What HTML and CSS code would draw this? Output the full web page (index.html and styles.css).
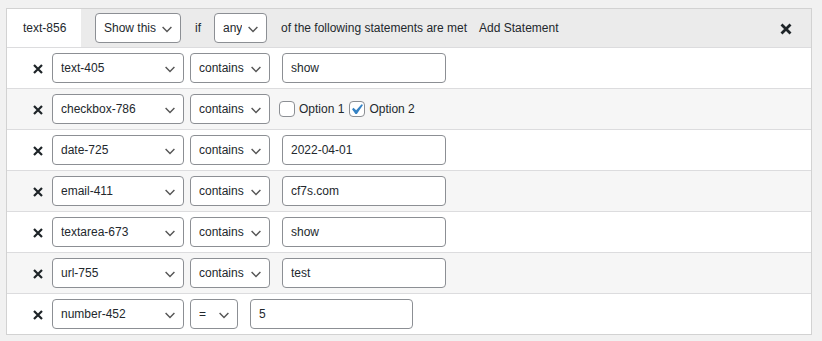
FILE: index.html
```html
<!DOCTYPE html>
<html>
<head>
<meta charset="utf-8">
<link rel="stylesheet" href="styles.css">
</head>
<body>
<div class="cond">
  <div class="cond-head">
    <div class="tag">text-856</div>
    <select class="sel sel-show"><option>Show this</option></select>
    <span class="lbl lbl-if">if</span>
    <select class="sel sel-any"><option>any</option></select>
    <span class="lbl lbl-of">of the following statements are met</span>
    <span class="lbl lbl-add">Add Statement</span>
    <span class="head-close"><svg width="12" height="12" viewBox="0 0 12 12"><path d="M1.5 1.5L10.5 10.5M10.5 1.5L1.5 10.5" stroke="#1d2327" stroke-width="2.8"/></svg></span>
  </div>
  <div class="rows">
    <div class="row">
      <span class="del"><svg width="10" height="10" viewBox="0 0 10 10"><path d="M1 1L9 9M9 1L1 9" stroke="#1d2327" stroke-width="2.2"/></svg></span>
      <select class="sel sel-field"><option>text-405</option></select>
      <select class="sel sel-op"><option>contains</option></select>
      <input class="val" type="text" value="show">
    </div>
    <div class="row">
      <span class="del"><svg width="10" height="10" viewBox="0 0 10 10"><path d="M1 1L9 9M9 1L1 9" stroke="#1d2327" stroke-width="2.2"/></svg></span>
      <select class="sel sel-field"><option>checkbox-786</option></select>
      <select class="sel sel-op"><option>contains</option></select>
      <div class="opts">
        <label class="opt"><input type="checkbox" class="cb">Option 1</label>
        <label class="opt"><input type="checkbox" class="cb" checked>Option 2</label>
      </div>
    </div>
    <div class="row">
      <span class="del"><svg width="10" height="10" viewBox="0 0 10 10"><path d="M1 1L9 9M9 1L1 9" stroke="#1d2327" stroke-width="2.2"/></svg></span>
      <select class="sel sel-field"><option>date-725</option></select>
      <select class="sel sel-op"><option>contains</option></select>
      <input class="val" type="text" value="2022-04-01">
    </div>
    <div class="row">
      <span class="del"><svg width="10" height="10" viewBox="0 0 10 10"><path d="M1 1L9 9M9 1L1 9" stroke="#1d2327" stroke-width="2.2"/></svg></span>
      <select class="sel sel-field"><option>email-411</option></select>
      <select class="sel sel-op"><option>contains</option></select>
      <input class="val" type="text" value="cf7s.com">
    </div>
    <div class="row">
      <span class="del"><svg width="10" height="10" viewBox="0 0 10 10"><path d="M1 1L9 9M9 1L1 9" stroke="#1d2327" stroke-width="2.2"/></svg></span>
      <select class="sel sel-field"><option>textarea-673</option></select>
      <select class="sel sel-op"><option>contains</option></select>
      <input class="val" type="text" value="show">
    </div>
    <div class="row">
      <span class="del"><svg width="10" height="10" viewBox="0 0 10 10"><path d="M1 1L9 9M9 1L1 9" stroke="#1d2327" stroke-width="2.2"/></svg></span>
      <select class="sel sel-field"><option>url-755</option></select>
      <select class="sel sel-op"><option>contains</option></select>
      <input class="val" type="text" value="test">
    </div>
    <div class="row">
      <span class="del"><svg width="10" height="10" viewBox="0 0 10 10"><path d="M1 1L9 9M9 1L1 9" stroke="#1d2327" stroke-width="2.2"/></svg></span>
      <select class="sel sel-field"><option>number-452</option></select>
      <select class="sel sel-eq"><option>=</option></select>
      <input class="val val-num" type="text" value="5">
    </div>
  </div>
</div>
</body>
</html>
```

FILE: styles.css
```css
html, body {
  margin: 0;
  padding: 0;
}
body {
  background: #f1f1f1;
  font-family: "Liberation Sans", Arial, sans-serif;
  font-size: 12px;
  color: #23282d;
  padding: 8px 0 0 6px;
}
.cond {
  width: 804px;
  border: 1px solid #d2d2d2;
  background: #fff;
}
.cond-head {
  display: flex;
  align-items: center;
  height: 38px;
  background: #ebebeb;
}
.tag {
  align-self: stretch;
  display: flex;
  align-items: center;
  width: 74px;
  box-sizing: border-box;
  padding-left: 16px;
  background: #fff;
}
.sel, .val {
  box-sizing: border-box;
  height: 30px;
  margin: 0;
  border: 1px solid #8c8f94;
  border-radius: 4px;
  font-family: "Liberation Sans", Arial, sans-serif;
  font-size: 12px;
  color: #23282d;
  background-color: #fff;
  outline: none;
}
.sel {
  -webkit-appearance: none;
  appearance: none;
  padding: 0 24px 0 8px;
  background-image: url("data:image/svg+xml;charset=US-ASCII,%3Csvg%20width%3D%2220%22%20height%3D%2220%22%20xmlns%3D%22http%3A%2F%2Fwww.w3.org%2F2000%2Fsvg%22%3E%3Cpath%20d%3D%22M4.5%207.5l5.5%205.5%205.5-5.5%22%20fill%3D%22none%22%20stroke%3D%22%23555%22%20stroke-width%3D%221.8%22%2F%3E%3C%2Fsvg%3E");
  background-repeat: no-repeat;
  background-position: right 5px top 55%;
  background-size: 16px 16px;
}
.val {
  padding: 0 8px;
}
.sel-show { width: 86px; margin-left: 14px; }
.sel-any { width: 53px; margin-left: 13px; }
.lbl-if { margin-left: 14px; }
.lbl-of { margin-left: 14px; }
.lbl-add { margin-left: 12px; }
.head-close {
  margin-left: auto;
  margin-right: 19px;
  display: flex;
  margin-top: 1px;
}
.rows .row {
  display: flex;
  align-items: center;
  height: 40px;
  border-top: 1px solid #dcdcde;
}
.rows .row:nth-child(even) {
  background: #f6f6f6;
}
.del {
  display: flex;
  margin-left: 26px;
  margin-top: 2px;
}
.sel-field { width: 132px; margin-left: 9px; }
.sel-op { width: 80px; margin-left: 6px; }
.sel-eq { width: 48px; margin-left: 6px; }
.val { width: 164px; margin-left: 12px; }
.val-num { width: 163px; }
.opts {
  display: flex;
  align-items: center;
  margin-left: 9px;
  gap: 5px;
}
.opt {
  display: flex;
  align-items: center;
  gap: 4px;
}
.cb {
  -webkit-appearance: none;
  appearance: none;
  box-sizing: border-box;
  width: 16px;
  height: 16px;
  margin: 0;
  border: 1px solid #8c8f94;
  border-radius: 4px;
  background: #fff;
}
.cb:checked {
  background-image: url("data:image/svg+xml;utf8,%3Csvg%20xmlns%3D%27http%3A%2F%2Fwww.w3.org%2F2000%2Fsvg%27%20viewBox%3D%270%200%2020%2020%27%3E%3Cpath%20d%3D%27M14.83%204.89l1.34.94-5.81%208.38H9.02L5.78%209.67l1.34-1.25%202.57%202.4z%27%20fill%3D%27%233582c4%27%2F%3E%3C%2Fsvg%3E");
  background-repeat: no-repeat;
  background-size: 21px 21px;
  background-position: -4px -3px;
}
```
